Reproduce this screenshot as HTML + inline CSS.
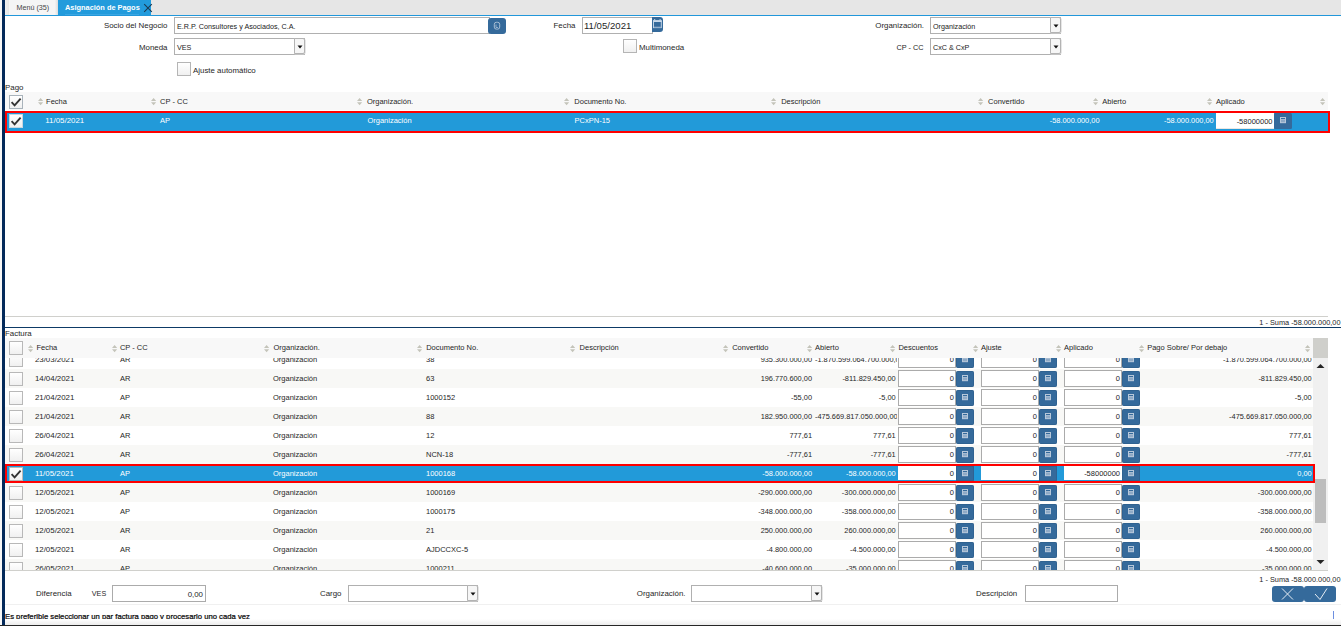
<!DOCTYPE html><html><head><meta charset="utf-8"><style>
html,body{margin:0;padding:0;}
body{width:1341px;height:626px;position:relative;overflow:hidden;background:#fff;font-family:"Liberation Sans", sans-serif;}
body div, body svg{position:absolute;box-sizing:border-box;}
.t{white-space:nowrap;}
.cb{width:14px;height:14px;border:1px solid #b5b5b5;background:linear-gradient(#fff,#f0f0f0);}
.btn{background:#356a9b;}
.inp{border:1px solid #ababab;background:#fff;}
</style></head><body>

<div style="left:0px;top:0px;width:2px;height:626px;background:#f7f7f7"></div>
<div style="left:2px;top:0px;width:3px;height:626px;background:#03295a"></div>
<div style="left:5px;top:0px;width:1336px;height:15px;background:#e6e6e6"></div>
<div style="left:5px;top:0px;width:52px;height:15px;background:#f5f5f5"></div>
<div style="left:5px;top:0px;width:4px;height:15px;background:linear-gradient(90deg,#f0f0f0,#e6e6e6)"></div>
<div style="left:58px;top:0px;width:93px;height:15px;background:#229bdc"></div>
<div style="left:55px;top:0px;width:3px;height:15px;background:linear-gradient(90deg,#f3f3f3,#dcdcdc)"></div>
<div style="left:5px;top:15px;width:1336px;height:1px;background:#2197da"></div>
<div class="t" style="left:16.5px;top:1.5px;height:12px;line-height:12px;font-size:7.2px;color:#444;">Menú (35)</div>
<div class="t" style="left:65px;top:1.5px;height:12px;line-height:12px;font-size:7.4px;color:#fff;font-weight:bold">Asignación de Pagos</div>
<div style="left:65px;top:14px;width:74px;height:1px;background:#3aa6e2"></div>
<svg style="left:143px;top:3px" width="10" height="10" viewBox="0 0 10 10"><path d="M1.2 1.2 L8.8 8.8 M8.8 1.2 L1.2 8.8" stroke="#1b3a52" stroke-width="1.1"/></svg>
<div class="t" style="right:1173.5px;top:20.3px;height:12px;line-height:12px;font-size:7.9px;color:#262626;text-align:right;">Socio del Negocio</div>
<div style="left:174px;top:17px;width:316px;height:17px;border:1px solid #b0b0b0;background:#fff"></div>
<div class="t" style="left:177px;top:20.5px;height:12px;line-height:12px;font-size:7.2px;color:#222;">E.R.P. Consultores y Asociados, C.A.</div>
<div class="btn" style="left:488px;top:18px;width:18px;height:16px;border-radius:3px"><svg width="18" height="16" style="position:absolute;left:0;top:0"><rect x="6.3" y="4.3" width="5.4" height="6.8" rx="2" fill="none" stroke="#a9bfd5" stroke-width="1"/><path d="M8 6.5 L8 9.5 L10 9.5" stroke="#a9bfd5" stroke-width="0.8" fill="none"/></svg></div>
<div class="t" style="right:1173.5px;top:41.8px;height:12px;line-height:12px;font-size:7.9px;color:#262626;text-align:right;">Moneda</div>
<div style="left:174px;top:38px;width:131px;height:17px;border:1px solid #b0b0b0;background:#fff"></div>
<div style="left:294px;top:38px;width:11px;height:16px;border:1px solid #b3b3b3;background:#f6f6f6;border-radius:0 2px 2px 0;box-shadow:0.6px 0.6px 0 #d6d6d6"></div>
<svg style="left:297px;top:44.5px" width="6" height="4" viewBox="0 0 6 4"><path d="M0.5 0.5 L5.5 0.5 L3 3.5Z" fill="#111"/></svg>
<div class="t" style="left:177px;top:41.8px;height:12px;line-height:12px;font-size:7.2px;color:#222;">VES</div>
<div class="cb" style="left:177px;top:62px;border-color:#b5b5b5"></div>
<div class="t" style="left:193px;top:65.3px;height:12px;line-height:12px;font-size:7.9px;color:#262626;">Ajuste automático</div>
<div class="t" style="left:553.5px;top:20.3px;height:12px;line-height:12px;font-size:7.9px;color:#262626;">Fecha</div>
<div style="left:582px;top:17px;width:71px;height:17px;border:1px solid #b0b0b0;background:#fff"></div>
<div class="t" style="left:584px;top:19.8px;height:12px;line-height:12px;font-size:9.6px;color:#262626;">11/05/2021</div>
<div class="btn" style="left:651.5px;top:17.3px;width:11.2px;height:15.2px;border-radius:0 3px 3px 0"><svg width="12" height="16" style="position:absolute;left:0;top:0"><rect x="1.5" y="4" width="7.8" height="6.6" fill="none" stroke="#c2d3e4" stroke-width="1"/><rect x="1" y="3.2" width="8.8" height="1.8" fill="#c9d9ea"/><rect x="2.2" y="2" width="1" height="1.5" fill="#c9d9ea"/><rect x="7.6" y="2" width="1" height="1.5" fill="#c9d9ea"/><rect x="2" y="9.6" width="7" height="1" fill="#7f9fc0"/></svg></div>
<div class="cb" style="left:623px;top:39px;border-color:#b5b5b5"></div>
<div class="t" style="left:639px;top:41.8px;height:12px;line-height:12px;font-size:7.9px;color:#262626;">Multimoneda</div>
<div class="t" style="right:417px;top:20.3px;height:12px;line-height:12px;font-size:7.9px;color:#262626;text-align:right;">Organización.</div>
<div style="left:930px;top:17px;width:131px;height:17px;border:1px solid #b0b0b0;background:#fff"></div>
<div style="left:1050px;top:17px;width:11px;height:16px;border:1px solid #b3b3b3;background:#f6f6f6;border-radius:0 2px 2px 0;box-shadow:0.6px 0.6px 0 #d6d6d6"></div>
<svg style="left:1053px;top:23.5px" width="6" height="4" viewBox="0 0 6 4"><path d="M0.5 0.5 L5.5 0.5 L3 3.5Z" fill="#111"/></svg>
<div class="t" style="left:933px;top:20.8px;height:12px;line-height:12px;font-size:7.2px;color:#222;">Organización</div>
<div class="t" style="right:417.5px;top:41.8px;height:12px;line-height:12px;font-size:7.3px;color:#262626;text-align:right;">CP - CC</div>
<div style="left:930px;top:38px;width:131px;height:17px;border:1px solid #b0b0b0;background:#fff"></div>
<div style="left:1050px;top:38px;width:11px;height:16px;border:1px solid #b3b3b3;background:#f6f6f6;border-radius:0 2px 2px 0;box-shadow:0.6px 0.6px 0 #d6d6d6"></div>
<svg style="left:1053px;top:44.5px" width="6" height="4" viewBox="0 0 6 4"><path d="M0.5 0.5 L5.5 0.5 L3 3.5Z" fill="#111"/></svg>
<div class="t" style="left:933px;top:41.8px;height:12px;line-height:12px;font-size:7.2px;color:#222;">CxC &amp; CxP</div>
<div class="t" style="left:5px;top:82.3px;height:12px;line-height:12px;font-size:7.9px;color:#262626;">Pago</div>
<div style="left:5px;top:92px;width:1323px;height:18px;background:#f8f8f8"></div>
<div class="cb" style="left:9px;top:95px;border-color:#a9b3bb"><svg width="14" height="14" viewBox="0 0 14 14" style="position:absolute;left:-1px;top:-1px"><path d="M2.6 7.2 L5.6 10.3 L11.6 3.6" stroke="#333" stroke-width="1.9" fill="none"/></svg></div>
<svg class="si" style="left:37.9px;top:97.80000000000001px" width="6" height="8" viewBox="0 0 6 8"><path d="M0 3 L2.6 0 L5.2 3Z M0 4.2 L2.6 7.2 L5.2 4.2Z" fill="#c4c4ba"/></svg>
<div class="t" style="left:46.1px;top:95.5px;height:12px;line-height:12px;font-size:7.5px;color:#262626;">Fecha</div>
<svg class="si" style="left:150.7px;top:97.80000000000001px" width="6" height="8" viewBox="0 0 6 8"><path d="M0 3 L2.6 0 L5.2 3Z M0 4.2 L2.6 7.2 L5.2 4.2Z" fill="#c4c4ba"/></svg>
<div class="t" style="left:160.1px;top:95.5px;height:12px;line-height:12px;font-size:7.5px;color:#262626;">CP - CC</div>
<svg class="si" style="left:357.2px;top:97.80000000000001px" width="6" height="8" viewBox="0 0 6 8"><path d="M0 3 L2.6 0 L5.2 3Z M0 4.2 L2.6 7.2 L5.2 4.2Z" fill="#c4c4ba"/></svg>
<div class="t" style="left:366.9px;top:95.5px;height:12px;line-height:12px;font-size:7.5px;color:#262626;">Organización.</div>
<svg class="si" style="left:563.9px;top:97.80000000000001px" width="6" height="8" viewBox="0 0 6 8"><path d="M0 3 L2.6 0 L5.2 3Z M0 4.2 L2.6 7.2 L5.2 4.2Z" fill="#c4c4ba"/></svg>
<div class="t" style="left:574.3000000000001px;top:95.5px;height:12px;line-height:12px;font-size:7.5px;color:#262626;">Documento No.</div>
<svg class="si" style="left:771.0px;top:97.80000000000001px" width="6" height="8" viewBox="0 0 6 8"><path d="M0 3 L2.6 0 L5.2 3Z M0 4.2 L2.6 7.2 L5.2 4.2Z" fill="#c4c4ba"/></svg>
<div class="t" style="left:781.2px;top:95.5px;height:12px;line-height:12px;font-size:7.5px;color:#262626;">Descripción</div>
<svg class="si" style="left:977.8px;top:97.80000000000001px" width="6" height="8" viewBox="0 0 6 8"><path d="M0 3 L2.6 0 L5.2 3Z M0 4.2 L2.6 7.2 L5.2 4.2Z" fill="#c4c4ba"/></svg>
<div class="t" style="left:988.1px;top:95.5px;height:12px;line-height:12px;font-size:7.5px;color:#262626;">Convertido</div>
<svg class="si" style="left:1092.9px;top:97.80000000000001px" width="6" height="8" viewBox="0 0 6 8"><path d="M0 3 L2.6 0 L5.2 3Z M0 4.2 L2.6 7.2 L5.2 4.2Z" fill="#c4c4ba"/></svg>
<div class="t" style="left:1102.3px;top:95.5px;height:12px;line-height:12px;font-size:7.5px;color:#262626;">Abierto</div>
<svg class="si" style="left:1207.0px;top:97.80000000000001px" width="6" height="8" viewBox="0 0 6 8"><path d="M0 3 L2.6 0 L5.2 3Z M0 4.2 L2.6 7.2 L5.2 4.2Z" fill="#c4c4ba"/></svg>
<div class="t" style="left:1216.0px;top:95.5px;height:12px;line-height:12px;font-size:7.5px;color:#262626;">Aplicado</div>
<svg class="si" style="left:1320.2px;top:97.80000000000001px" width="6" height="8" viewBox="0 0 6 8"><path d="M0 3 L2.6 0 L5.2 3Z M0 4.2 L2.6 7.2 L5.2 4.2Z" fill="#c4c4ba"/></svg>
<div style="left:5px;top:111px;width:1325px;height:22px;border:2px solid #f00;background:#229ad9"></div>
<div class="cb" style="left:9px;top:114px;border-color:#c9d6e0"><svg width="14" height="14" viewBox="0 0 14 14" style="position:absolute;left:-1px;top:-1px"><path d="M2.6 7.2 L5.6 10.3 L11.6 3.6" stroke="#333" stroke-width="1.9" fill="none"/></svg></div>
<div class="t" style="left:45.3px;top:115.2px;height:12px;line-height:12px;font-size:7.9px;color:#fff;">11/05/2021</div>
<div class="t" style="left:160px;top:115.3px;height:12px;line-height:12px;font-size:7.5px;color:#fff;">AP</div>
<div class="t" style="left:367.4px;top:115.3px;height:12px;line-height:12px;font-size:7.5px;color:#fff;">Organización</div>
<div class="t" style="left:574.6px;top:115.3px;height:12px;line-height:12px;font-size:7.5px;color:#fff;">PCxPN-15</div>
<div class="t" style="right:241.5px;top:115.3px;height:12px;line-height:12px;font-size:7.4px;color:#fff;text-align:right;">-58.000.000,00</div>
<div class="t" style="right:127.29999999999995px;top:115.3px;height:12px;line-height:12px;font-size:7.4px;color:#fff;text-align:right;">-58.000.000,00</div>
<div style="left:1216px;top:113px;width:58px;height:15.8px;background:#fff;box-shadow:inset 0 -0.6px 0 #d8cfc8"></div>
<div class="t" style="right:68.5px;top:116.3px;height:12px;line-height:12px;font-size:7.5px;color:#222;text-align:right;">-58000000</div>
<div class="btn" style="left:1273.6px;top:113px;width:18px;height:16px;border-radius:1.5px"><svg width="18" height="16" style="position:absolute;left:0;top:0"><rect x="6" y="4" width="6" height="6.2" fill="#b7c8da"/><rect x="7" y="5" width="4" height="1.1" fill="#356a9b"/><rect x="7" y="6.9" width="4" height="2.3" fill="#8faac6"/></svg></div>
<div style="left:5px;top:316px;width:1323px;height:1px;background:#d0d0cc"></div>
<div class="t" style="left:1341px;top:316.5px;height:12px;line-height:12px;font-size:7.35px;color:#262626;left:1259.3px;right:auto">1 - Suma -58.000.000,00</div>
<div style="left:5px;top:327px;width:1336px;height:1px;background:#0d3a66"></div>
<div class="t" style="left:5px;top:327.8px;height:12px;line-height:12px;font-size:7.9px;color:#262626;">Factura</div>
<div style="left:5px;top:357.6px;width:1308px;height:212.4px;overflow:hidden">
<div class="cb" style="left:4px;top:-4.800000000000011px;border-color:#b8b8b8"></div>
<div class="t" style="left:29.9px;top:-4.000000000000011px;height:12px;line-height:12px;font-size:7.9px;color:#262626">23/03/2021</div>
<div class="t" style="left:115px;top:-4.000000000000011px;height:12px;line-height:12px;font-size:7.5px;color:#262626">AR</div>
<div class="t" style="left:268px;top:-4.000000000000011px;height:12px;line-height:12px;font-size:7.5px;color:#262626">Organización</div>
<div class="t" style="left:421px;top:-4.000000000000011px;height:12px;line-height:12px;font-size:7.5px;color:#262626">38</div>
<div style="left:713px;top:-7.800000000000011px;width:96px;height:19px;overflow:hidden">
<div class="t" style="right:2px;top:3.8000000000000007px;height:12px;line-height:12px;font-size:7.4px;color:#262626;text-align:right">935.300.000,00</div></div>
<div style="left:809px;top:-7.800000000000011px;width:83px;height:19px;overflow:hidden">
<div class="t" style="left:1px;top:3.8000000000000007px;height:12px;line-height:12px;font-size:7.4px;color:#262626;text-align:right">-1.870.599.064.700.000,00</div></div>
<div class="inp" style="left:893px;top:-6.600000000000011px;width:58px;height:16.7px"></div>
<div class="t" style="left:893px;width:56px;top:-4.000000000000011px;height:12px;line-height:12px;font-size:7.5px;color:#222;text-align:right">0</div>
<div class="btn" style="left:951px;top:-5.300000000000011px;width:18px;height:15.5px;border-radius:2.2px;box-shadow:inset 0 0 0 0.5px #2b5a86"><svg width="18" height="16" style="position:absolute;left:0;top:0"><rect x="6" y="4" width="6" height="6.2" fill="#b7c8da"/><rect x="7" y="5" width="4" height="1.1" fill="#356a9b"/><rect x="7" y="6.9" width="4" height="2.3" fill="#8faac6"/></svg></div>
<div class="inp" style="left:976px;top:-6.600000000000011px;width:58px;height:16.7px"></div>
<div class="t" style="left:976px;width:56px;top:-4.000000000000011px;height:12px;line-height:12px;font-size:7.5px;color:#222;text-align:right">0</div>
<div class="btn" style="left:1034px;top:-5.300000000000011px;width:18px;height:15.5px;border-radius:2.2px;box-shadow:inset 0 0 0 0.5px #2b5a86"><svg width="18" height="16" style="position:absolute;left:0;top:0"><rect x="6" y="4" width="6" height="6.2" fill="#b7c8da"/><rect x="7" y="5" width="4" height="1.1" fill="#356a9b"/><rect x="7" y="6.9" width="4" height="2.3" fill="#8faac6"/></svg></div>
<div class="inp" style="left:1059px;top:-6.600000000000011px;width:58px;height:16.7px"></div>
<div class="t" style="left:1059px;width:56px;top:-4.000000000000011px;height:12px;line-height:12px;font-size:7.5px;color:#222;text-align:right">0</div>
<div class="btn" style="left:1117px;top:-5.300000000000011px;width:18px;height:15.5px;border-radius:2.2px;box-shadow:inset 0 0 0 0.5px #2b5a86"><svg width="18" height="16" style="position:absolute;left:0;top:0"><rect x="6" y="4" width="6" height="6.2" fill="#b7c8da"/><rect x="7" y="5" width="4" height="1.1" fill="#356a9b"/><rect x="7" y="6.9" width="4" height="2.3" fill="#8faac6"/></svg></div>
<div class="t" style="left:1156.7px;width:150px;top:-4.000000000000011px;height:12px;line-height:12px;font-size:7.4px;color:#262626;text-align:right">-1.870.599.064.700.000,00</div>
<div style="left:0px;top:11.199999999999989px;width:1308px;height:19px;background:#f8f8f6"></div>
<div class="cb" style="left:4px;top:14.199999999999989px;border-color:#b8b8b8"></div>
<div class="t" style="left:29.9px;top:14.99999999999999px;height:12px;line-height:12px;font-size:7.9px;color:#262626">14/04/2021</div>
<div class="t" style="left:115px;top:14.99999999999999px;height:12px;line-height:12px;font-size:7.5px;color:#262626">AR</div>
<div class="t" style="left:268px;top:14.99999999999999px;height:12px;line-height:12px;font-size:7.5px;color:#262626">Organización</div>
<div class="t" style="left:421px;top:14.99999999999999px;height:12px;line-height:12px;font-size:7.5px;color:#262626">63</div>
<div style="left:713px;top:11.199999999999989px;width:96px;height:19px;overflow:hidden">
<div class="t" style="right:2px;top:3.8000000000000007px;height:12px;line-height:12px;font-size:7.4px;color:#262626;text-align:right">196.770.600,00</div></div>
<div style="left:809px;top:11.199999999999989px;width:83px;height:19px;overflow:hidden">
<div class="t" style="right:1.3px;top:3.8000000000000007px;height:12px;line-height:12px;font-size:7.4px;color:#262626;text-align:right">-811.829.450,00</div></div>
<div class="inp" style="left:893px;top:12.399999999999988px;width:58px;height:16.7px"></div>
<div class="t" style="left:893px;width:56px;top:14.99999999999999px;height:12px;line-height:12px;font-size:7.5px;color:#222;text-align:right">0</div>
<div class="btn" style="left:951px;top:13.699999999999989px;width:18px;height:15.5px;border-radius:2.2px;box-shadow:inset 0 0 0 0.5px #2b5a86"><svg width="18" height="16" style="position:absolute;left:0;top:0"><rect x="6" y="4" width="6" height="6.2" fill="#b7c8da"/><rect x="7" y="5" width="4" height="1.1" fill="#356a9b"/><rect x="7" y="6.9" width="4" height="2.3" fill="#8faac6"/></svg></div>
<div class="inp" style="left:976px;top:12.399999999999988px;width:58px;height:16.7px"></div>
<div class="t" style="left:976px;width:56px;top:14.99999999999999px;height:12px;line-height:12px;font-size:7.5px;color:#222;text-align:right">0</div>
<div class="btn" style="left:1034px;top:13.699999999999989px;width:18px;height:15.5px;border-radius:2.2px;box-shadow:inset 0 0 0 0.5px #2b5a86"><svg width="18" height="16" style="position:absolute;left:0;top:0"><rect x="6" y="4" width="6" height="6.2" fill="#b7c8da"/><rect x="7" y="5" width="4" height="1.1" fill="#356a9b"/><rect x="7" y="6.9" width="4" height="2.3" fill="#8faac6"/></svg></div>
<div class="inp" style="left:1059px;top:12.399999999999988px;width:58px;height:16.7px"></div>
<div class="t" style="left:1059px;width:56px;top:14.99999999999999px;height:12px;line-height:12px;font-size:7.5px;color:#222;text-align:right">0</div>
<div class="btn" style="left:1117px;top:13.699999999999989px;width:18px;height:15.5px;border-radius:2.2px;box-shadow:inset 0 0 0 0.5px #2b5a86"><svg width="18" height="16" style="position:absolute;left:0;top:0"><rect x="6" y="4" width="6" height="6.2" fill="#b7c8da"/><rect x="7" y="5" width="4" height="1.1" fill="#356a9b"/><rect x="7" y="6.9" width="4" height="2.3" fill="#8faac6"/></svg></div>
<div class="t" style="left:1156.7px;width:150px;top:14.99999999999999px;height:12px;line-height:12px;font-size:7.4px;color:#262626;text-align:right">-811.829.450,00</div>
<div class="cb" style="left:4px;top:33.19999999999999px;border-color:#b8b8b8"></div>
<div class="t" style="left:29.9px;top:33.999999999999986px;height:12px;line-height:12px;font-size:7.9px;color:#262626">21/04/2021</div>
<div class="t" style="left:115px;top:33.999999999999986px;height:12px;line-height:12px;font-size:7.5px;color:#262626">AP</div>
<div class="t" style="left:268px;top:33.999999999999986px;height:12px;line-height:12px;font-size:7.5px;color:#262626">Organización</div>
<div class="t" style="left:421px;top:33.999999999999986px;height:12px;line-height:12px;font-size:7.5px;color:#262626">1000152</div>
<div style="left:713px;top:30.19999999999999px;width:96px;height:19px;overflow:hidden">
<div class="t" style="right:2px;top:3.799999999999997px;height:12px;line-height:12px;font-size:7.4px;color:#262626;text-align:right">-55,00</div></div>
<div style="left:809px;top:30.19999999999999px;width:83px;height:19px;overflow:hidden">
<div class="t" style="right:1.3px;top:3.799999999999997px;height:12px;line-height:12px;font-size:7.4px;color:#262626;text-align:right">-5,00</div></div>
<div class="inp" style="left:893px;top:31.399999999999988px;width:58px;height:16.7px"></div>
<div class="t" style="left:893px;width:56px;top:33.999999999999986px;height:12px;line-height:12px;font-size:7.5px;color:#222;text-align:right">0</div>
<div class="btn" style="left:951px;top:32.69999999999999px;width:18px;height:15.5px;border-radius:2.2px;box-shadow:inset 0 0 0 0.5px #2b5a86"><svg width="18" height="16" style="position:absolute;left:0;top:0"><rect x="6" y="4" width="6" height="6.2" fill="#b7c8da"/><rect x="7" y="5" width="4" height="1.1" fill="#356a9b"/><rect x="7" y="6.9" width="4" height="2.3" fill="#8faac6"/></svg></div>
<div class="inp" style="left:976px;top:31.399999999999988px;width:58px;height:16.7px"></div>
<div class="t" style="left:976px;width:56px;top:33.999999999999986px;height:12px;line-height:12px;font-size:7.5px;color:#222;text-align:right">0</div>
<div class="btn" style="left:1034px;top:32.69999999999999px;width:18px;height:15.5px;border-radius:2.2px;box-shadow:inset 0 0 0 0.5px #2b5a86"><svg width="18" height="16" style="position:absolute;left:0;top:0"><rect x="6" y="4" width="6" height="6.2" fill="#b7c8da"/><rect x="7" y="5" width="4" height="1.1" fill="#356a9b"/><rect x="7" y="6.9" width="4" height="2.3" fill="#8faac6"/></svg></div>
<div class="inp" style="left:1059px;top:31.399999999999988px;width:58px;height:16.7px"></div>
<div class="t" style="left:1059px;width:56px;top:33.999999999999986px;height:12px;line-height:12px;font-size:7.5px;color:#222;text-align:right">0</div>
<div class="btn" style="left:1117px;top:32.69999999999999px;width:18px;height:15.5px;border-radius:2.2px;box-shadow:inset 0 0 0 0.5px #2b5a86"><svg width="18" height="16" style="position:absolute;left:0;top:0"><rect x="6" y="4" width="6" height="6.2" fill="#b7c8da"/><rect x="7" y="5" width="4" height="1.1" fill="#356a9b"/><rect x="7" y="6.9" width="4" height="2.3" fill="#8faac6"/></svg></div>
<div class="t" style="left:1156.7px;width:150px;top:33.999999999999986px;height:12px;line-height:12px;font-size:7.4px;color:#262626;text-align:right">-5,00</div>
<div style="left:0px;top:49.19999999999999px;width:1308px;height:19px;background:#f8f8f6"></div>
<div class="cb" style="left:4px;top:52.19999999999999px;border-color:#b8b8b8"></div>
<div class="t" style="left:29.9px;top:52.999999999999986px;height:12px;line-height:12px;font-size:7.9px;color:#262626">21/04/2021</div>
<div class="t" style="left:115px;top:52.999999999999986px;height:12px;line-height:12px;font-size:7.5px;color:#262626">AR</div>
<div class="t" style="left:268px;top:52.999999999999986px;height:12px;line-height:12px;font-size:7.5px;color:#262626">Organización</div>
<div class="t" style="left:421px;top:52.999999999999986px;height:12px;line-height:12px;font-size:7.5px;color:#262626">88</div>
<div style="left:713px;top:49.19999999999999px;width:96px;height:19px;overflow:hidden">
<div class="t" style="right:2px;top:3.799999999999997px;height:12px;line-height:12px;font-size:7.4px;color:#262626;text-align:right">182.950.000,00</div></div>
<div style="left:809px;top:49.19999999999999px;width:83px;height:19px;overflow:hidden">
<div class="t" style="left:1px;top:3.799999999999997px;height:12px;line-height:12px;font-size:7.4px;color:#262626;text-align:right">-475.669.817.050.000,00</div></div>
<div class="inp" style="left:893px;top:50.39999999999999px;width:58px;height:16.7px"></div>
<div class="t" style="left:893px;width:56px;top:52.999999999999986px;height:12px;line-height:12px;font-size:7.5px;color:#222;text-align:right">0</div>
<div class="btn" style="left:951px;top:51.69999999999999px;width:18px;height:15.5px;border-radius:2.2px;box-shadow:inset 0 0 0 0.5px #2b5a86"><svg width="18" height="16" style="position:absolute;left:0;top:0"><rect x="6" y="4" width="6" height="6.2" fill="#b7c8da"/><rect x="7" y="5" width="4" height="1.1" fill="#356a9b"/><rect x="7" y="6.9" width="4" height="2.3" fill="#8faac6"/></svg></div>
<div class="inp" style="left:976px;top:50.39999999999999px;width:58px;height:16.7px"></div>
<div class="t" style="left:976px;width:56px;top:52.999999999999986px;height:12px;line-height:12px;font-size:7.5px;color:#222;text-align:right">0</div>
<div class="btn" style="left:1034px;top:51.69999999999999px;width:18px;height:15.5px;border-radius:2.2px;box-shadow:inset 0 0 0 0.5px #2b5a86"><svg width="18" height="16" style="position:absolute;left:0;top:0"><rect x="6" y="4" width="6" height="6.2" fill="#b7c8da"/><rect x="7" y="5" width="4" height="1.1" fill="#356a9b"/><rect x="7" y="6.9" width="4" height="2.3" fill="#8faac6"/></svg></div>
<div class="inp" style="left:1059px;top:50.39999999999999px;width:58px;height:16.7px"></div>
<div class="t" style="left:1059px;width:56px;top:52.999999999999986px;height:12px;line-height:12px;font-size:7.5px;color:#222;text-align:right">0</div>
<div class="btn" style="left:1117px;top:51.69999999999999px;width:18px;height:15.5px;border-radius:2.2px;box-shadow:inset 0 0 0 0.5px #2b5a86"><svg width="18" height="16" style="position:absolute;left:0;top:0"><rect x="6" y="4" width="6" height="6.2" fill="#b7c8da"/><rect x="7" y="5" width="4" height="1.1" fill="#356a9b"/><rect x="7" y="6.9" width="4" height="2.3" fill="#8faac6"/></svg></div>
<div class="t" style="left:1156.7px;width:150px;top:52.999999999999986px;height:12px;line-height:12px;font-size:7.4px;color:#262626;text-align:right">-475.669.817.050.000,00</div>
<div class="cb" style="left:4px;top:71.19999999999999px;border-color:#b8b8b8"></div>
<div class="t" style="left:29.9px;top:71.99999999999999px;height:12px;line-height:12px;font-size:7.9px;color:#262626">26/04/2021</div>
<div class="t" style="left:115px;top:71.99999999999999px;height:12px;line-height:12px;font-size:7.5px;color:#262626">AR</div>
<div class="t" style="left:268px;top:71.99999999999999px;height:12px;line-height:12px;font-size:7.5px;color:#262626">Organización</div>
<div class="t" style="left:421px;top:71.99999999999999px;height:12px;line-height:12px;font-size:7.5px;color:#262626">12</div>
<div style="left:713px;top:68.19999999999999px;width:96px;height:19px;overflow:hidden">
<div class="t" style="right:2px;top:3.799999999999997px;height:12px;line-height:12px;font-size:7.4px;color:#262626;text-align:right">777,61</div></div>
<div style="left:809px;top:68.19999999999999px;width:83px;height:19px;overflow:hidden">
<div class="t" style="right:1.3px;top:3.799999999999997px;height:12px;line-height:12px;font-size:7.4px;color:#262626;text-align:right">777,61</div></div>
<div class="inp" style="left:893px;top:69.39999999999999px;width:58px;height:16.7px"></div>
<div class="t" style="left:893px;width:56px;top:71.99999999999999px;height:12px;line-height:12px;font-size:7.5px;color:#222;text-align:right">0</div>
<div class="btn" style="left:951px;top:70.69999999999999px;width:18px;height:15.5px;border-radius:2.2px;box-shadow:inset 0 0 0 0.5px #2b5a86"><svg width="18" height="16" style="position:absolute;left:0;top:0"><rect x="6" y="4" width="6" height="6.2" fill="#b7c8da"/><rect x="7" y="5" width="4" height="1.1" fill="#356a9b"/><rect x="7" y="6.9" width="4" height="2.3" fill="#8faac6"/></svg></div>
<div class="inp" style="left:976px;top:69.39999999999999px;width:58px;height:16.7px"></div>
<div class="t" style="left:976px;width:56px;top:71.99999999999999px;height:12px;line-height:12px;font-size:7.5px;color:#222;text-align:right">0</div>
<div class="btn" style="left:1034px;top:70.69999999999999px;width:18px;height:15.5px;border-radius:2.2px;box-shadow:inset 0 0 0 0.5px #2b5a86"><svg width="18" height="16" style="position:absolute;left:0;top:0"><rect x="6" y="4" width="6" height="6.2" fill="#b7c8da"/><rect x="7" y="5" width="4" height="1.1" fill="#356a9b"/><rect x="7" y="6.9" width="4" height="2.3" fill="#8faac6"/></svg></div>
<div class="inp" style="left:1059px;top:69.39999999999999px;width:58px;height:16.7px"></div>
<div class="t" style="left:1059px;width:56px;top:71.99999999999999px;height:12px;line-height:12px;font-size:7.5px;color:#222;text-align:right">0</div>
<div class="btn" style="left:1117px;top:70.69999999999999px;width:18px;height:15.5px;border-radius:2.2px;box-shadow:inset 0 0 0 0.5px #2b5a86"><svg width="18" height="16" style="position:absolute;left:0;top:0"><rect x="6" y="4" width="6" height="6.2" fill="#b7c8da"/><rect x="7" y="5" width="4" height="1.1" fill="#356a9b"/><rect x="7" y="6.9" width="4" height="2.3" fill="#8faac6"/></svg></div>
<div class="t" style="left:1156.7px;width:150px;top:71.99999999999999px;height:12px;line-height:12px;font-size:7.4px;color:#262626;text-align:right">777,61</div>
<div style="left:0px;top:87.19999999999999px;width:1308px;height:19px;background:#f8f8f6"></div>
<div class="cb" style="left:4px;top:90.19999999999999px;border-color:#b8b8b8"></div>
<div class="t" style="left:29.9px;top:90.99999999999999px;height:12px;line-height:12px;font-size:7.9px;color:#262626">26/04/2021</div>
<div class="t" style="left:115px;top:90.99999999999999px;height:12px;line-height:12px;font-size:7.5px;color:#262626">AR</div>
<div class="t" style="left:268px;top:90.99999999999999px;height:12px;line-height:12px;font-size:7.5px;color:#262626">Organización</div>
<div class="t" style="left:421px;top:90.99999999999999px;height:12px;line-height:12px;font-size:7.5px;color:#262626">NCN-18</div>
<div style="left:713px;top:87.19999999999999px;width:96px;height:19px;overflow:hidden">
<div class="t" style="right:2px;top:3.799999999999997px;height:12px;line-height:12px;font-size:7.4px;color:#262626;text-align:right">-777,61</div></div>
<div style="left:809px;top:87.19999999999999px;width:83px;height:19px;overflow:hidden">
<div class="t" style="right:1.3px;top:3.799999999999997px;height:12px;line-height:12px;font-size:7.4px;color:#262626;text-align:right">-777,61</div></div>
<div class="inp" style="left:893px;top:88.39999999999999px;width:58px;height:16.7px"></div>
<div class="t" style="left:893px;width:56px;top:90.99999999999999px;height:12px;line-height:12px;font-size:7.5px;color:#222;text-align:right">0</div>
<div class="btn" style="left:951px;top:89.69999999999999px;width:18px;height:15.5px;border-radius:2.2px;box-shadow:inset 0 0 0 0.5px #2b5a86"><svg width="18" height="16" style="position:absolute;left:0;top:0"><rect x="6" y="4" width="6" height="6.2" fill="#b7c8da"/><rect x="7" y="5" width="4" height="1.1" fill="#356a9b"/><rect x="7" y="6.9" width="4" height="2.3" fill="#8faac6"/></svg></div>
<div class="inp" style="left:976px;top:88.39999999999999px;width:58px;height:16.7px"></div>
<div class="t" style="left:976px;width:56px;top:90.99999999999999px;height:12px;line-height:12px;font-size:7.5px;color:#222;text-align:right">0</div>
<div class="btn" style="left:1034px;top:89.69999999999999px;width:18px;height:15.5px;border-radius:2.2px;box-shadow:inset 0 0 0 0.5px #2b5a86"><svg width="18" height="16" style="position:absolute;left:0;top:0"><rect x="6" y="4" width="6" height="6.2" fill="#b7c8da"/><rect x="7" y="5" width="4" height="1.1" fill="#356a9b"/><rect x="7" y="6.9" width="4" height="2.3" fill="#8faac6"/></svg></div>
<div class="inp" style="left:1059px;top:88.39999999999999px;width:58px;height:16.7px"></div>
<div class="t" style="left:1059px;width:56px;top:90.99999999999999px;height:12px;line-height:12px;font-size:7.5px;color:#222;text-align:right">0</div>
<div class="btn" style="left:1117px;top:89.69999999999999px;width:18px;height:15.5px;border-radius:2.2px;box-shadow:inset 0 0 0 0.5px #2b5a86"><svg width="18" height="16" style="position:absolute;left:0;top:0"><rect x="6" y="4" width="6" height="6.2" fill="#b7c8da"/><rect x="7" y="5" width="4" height="1.1" fill="#356a9b"/><rect x="7" y="6.9" width="4" height="2.3" fill="#8faac6"/></svg></div>
<div class="t" style="left:1156.7px;width:150px;top:90.99999999999999px;height:12px;line-height:12px;font-size:7.4px;color:#262626;text-align:right">-777,61</div>
<div style="left:0px;top:106.39999999999999px;width:1308px;height:19px;background:#229ad9"></div>
<div class="cb" style="left:4px;top:109.19999999999999px;border-color:#b8b8b8"><svg width="14" height="14" viewBox="0 0 14 14" style="position:absolute;left:-1px;top:-1px"><path d="M2.6 7.2 L5.6 10.3 L11.6 3.6" stroke="#333" stroke-width="1.9" fill="none"/></svg></div>
<div class="t" style="left:29.9px;top:109.99999999999999px;height:12px;line-height:12px;font-size:7.9px;color:#fff">11/05/2021</div>
<div class="t" style="left:115px;top:109.99999999999999px;height:12px;line-height:12px;font-size:7.5px;color:#fff">AP</div>
<div class="t" style="left:268px;top:109.99999999999999px;height:12px;line-height:12px;font-size:7.5px;color:#fff">Organización</div>
<div class="t" style="left:421px;top:109.99999999999999px;height:12px;line-height:12px;font-size:7.5px;color:#fff">1000168</div>
<div style="left:713px;top:106.19999999999999px;width:96px;height:19px;overflow:hidden">
<div class="t" style="right:2px;top:3.799999999999997px;height:12px;line-height:12px;font-size:7.4px;color:#fff;text-align:right">-58.000.000,00</div></div>
<div style="left:809px;top:106.19999999999999px;width:83px;height:19px;overflow:hidden">
<div class="t" style="right:1.3px;top:3.799999999999997px;height:12px;line-height:12px;font-size:7.4px;color:#fff;text-align:right">-58.000.000,00</div></div>
<div class="inp" style="left:893px;top:107.39999999999999px;width:58px;height:15px;border-color:#fff"></div>
<div class="t" style="left:893px;width:56px;top:109.99999999999999px;height:12px;line-height:12px;font-size:7.5px;color:#222;text-align:right">0</div>
<div class="btn" style="left:951px;top:108.39999999999999px;width:18px;height:15.5px;border-radius:1px;box-shadow:inset 0 0 0 0.5px #2b5a86"><svg width="18" height="16" style="position:absolute;left:0;top:0"><rect x="6" y="4" width="6" height="6.2" fill="#b7c8da"/><rect x="7" y="5" width="4" height="1.1" fill="#356a9b"/><rect x="7" y="6.9" width="4" height="2.3" fill="#8faac6"/></svg></div>
<div class="inp" style="left:976px;top:107.39999999999999px;width:58px;height:15px;border-color:#fff"></div>
<div class="t" style="left:976px;width:56px;top:109.99999999999999px;height:12px;line-height:12px;font-size:7.5px;color:#222;text-align:right">0</div>
<div class="btn" style="left:1034px;top:108.39999999999999px;width:18px;height:15.5px;border-radius:1px;box-shadow:inset 0 0 0 0.5px #2b5a86"><svg width="18" height="16" style="position:absolute;left:0;top:0"><rect x="6" y="4" width="6" height="6.2" fill="#b7c8da"/><rect x="7" y="5" width="4" height="1.1" fill="#356a9b"/><rect x="7" y="6.9" width="4" height="2.3" fill="#8faac6"/></svg></div>
<div class="inp" style="left:1059px;top:107.39999999999999px;width:58px;height:15px;border-color:#fff"></div>
<div class="t" style="left:1059px;width:56px;top:109.99999999999999px;height:12px;line-height:12px;font-size:7.5px;color:#222;text-align:right">-58000000</div>
<div class="btn" style="left:1117px;top:108.39999999999999px;width:18px;height:15.5px;border-radius:1px;box-shadow:inset 0 0 0 0.5px #2b5a86"><svg width="18" height="16" style="position:absolute;left:0;top:0"><rect x="6" y="4" width="6" height="6.2" fill="#b7c8da"/><rect x="7" y="5" width="4" height="1.1" fill="#356a9b"/><rect x="7" y="6.9" width="4" height="2.3" fill="#8faac6"/></svg></div>
<div class="t" style="left:1156.7px;width:150px;top:109.99999999999999px;height:12px;line-height:12px;font-size:7.4px;color:#fff;text-align:right">0,00</div>
<div style="left:0px;top:125.19999999999999px;width:1308px;height:19px;background:#f8f8f6"></div>
<div class="cb" style="left:4px;top:128.2px;border-color:#b8b8b8"></div>
<div class="t" style="left:29.9px;top:129.0px;height:12px;line-height:12px;font-size:7.9px;color:#262626">12/05/2021</div>
<div class="t" style="left:115px;top:129.0px;height:12px;line-height:12px;font-size:7.5px;color:#262626">AP</div>
<div class="t" style="left:268px;top:129.0px;height:12px;line-height:12px;font-size:7.5px;color:#262626">Organización</div>
<div class="t" style="left:421px;top:129.0px;height:12px;line-height:12px;font-size:7.5px;color:#262626">1000169</div>
<div style="left:713px;top:125.19999999999999px;width:96px;height:19px;overflow:hidden">
<div class="t" style="right:2px;top:3.8000000000000114px;height:12px;line-height:12px;font-size:7.4px;color:#262626;text-align:right">-290.000.000,00</div></div>
<div style="left:809px;top:125.19999999999999px;width:83px;height:19px;overflow:hidden">
<div class="t" style="right:1.3px;top:3.8000000000000114px;height:12px;line-height:12px;font-size:7.4px;color:#262626;text-align:right">-300.000.000,00</div></div>
<div class="inp" style="left:893px;top:126.39999999999999px;width:58px;height:16.7px"></div>
<div class="t" style="left:893px;width:56px;top:129.0px;height:12px;line-height:12px;font-size:7.5px;color:#222;text-align:right">0</div>
<div class="btn" style="left:951px;top:127.69999999999999px;width:18px;height:15.5px;border-radius:2.2px;box-shadow:inset 0 0 0 0.5px #2b5a86"><svg width="18" height="16" style="position:absolute;left:0;top:0"><rect x="6" y="4" width="6" height="6.2" fill="#b7c8da"/><rect x="7" y="5" width="4" height="1.1" fill="#356a9b"/><rect x="7" y="6.9" width="4" height="2.3" fill="#8faac6"/></svg></div>
<div class="inp" style="left:976px;top:126.39999999999999px;width:58px;height:16.7px"></div>
<div class="t" style="left:976px;width:56px;top:129.0px;height:12px;line-height:12px;font-size:7.5px;color:#222;text-align:right">0</div>
<div class="btn" style="left:1034px;top:127.69999999999999px;width:18px;height:15.5px;border-radius:2.2px;box-shadow:inset 0 0 0 0.5px #2b5a86"><svg width="18" height="16" style="position:absolute;left:0;top:0"><rect x="6" y="4" width="6" height="6.2" fill="#b7c8da"/><rect x="7" y="5" width="4" height="1.1" fill="#356a9b"/><rect x="7" y="6.9" width="4" height="2.3" fill="#8faac6"/></svg></div>
<div class="inp" style="left:1059px;top:126.39999999999999px;width:58px;height:16.7px"></div>
<div class="t" style="left:1059px;width:56px;top:129.0px;height:12px;line-height:12px;font-size:7.5px;color:#222;text-align:right">0</div>
<div class="btn" style="left:1117px;top:127.69999999999999px;width:18px;height:15.5px;border-radius:2.2px;box-shadow:inset 0 0 0 0.5px #2b5a86"><svg width="18" height="16" style="position:absolute;left:0;top:0"><rect x="6" y="4" width="6" height="6.2" fill="#b7c8da"/><rect x="7" y="5" width="4" height="1.1" fill="#356a9b"/><rect x="7" y="6.9" width="4" height="2.3" fill="#8faac6"/></svg></div>
<div class="t" style="left:1156.7px;width:150px;top:129.0px;height:12px;line-height:12px;font-size:7.4px;color:#262626;text-align:right">-300.000.000,00</div>
<div class="cb" style="left:4px;top:147.2px;border-color:#b8b8b8"></div>
<div class="t" style="left:29.9px;top:148.0px;height:12px;line-height:12px;font-size:7.9px;color:#262626">12/05/2021</div>
<div class="t" style="left:115px;top:148.0px;height:12px;line-height:12px;font-size:7.5px;color:#262626">AP</div>
<div class="t" style="left:268px;top:148.0px;height:12px;line-height:12px;font-size:7.5px;color:#262626">Organización</div>
<div class="t" style="left:421px;top:148.0px;height:12px;line-height:12px;font-size:7.5px;color:#262626">1000175</div>
<div style="left:713px;top:144.2px;width:96px;height:19px;overflow:hidden">
<div class="t" style="right:2px;top:3.8000000000000114px;height:12px;line-height:12px;font-size:7.4px;color:#262626;text-align:right">-348.000.000,00</div></div>
<div style="left:809px;top:144.2px;width:83px;height:19px;overflow:hidden">
<div class="t" style="right:1.3px;top:3.8000000000000114px;height:12px;line-height:12px;font-size:7.4px;color:#262626;text-align:right">-358.000.000,00</div></div>
<div class="inp" style="left:893px;top:145.39999999999998px;width:58px;height:16.7px"></div>
<div class="t" style="left:893px;width:56px;top:148.0px;height:12px;line-height:12px;font-size:7.5px;color:#222;text-align:right">0</div>
<div class="btn" style="left:951px;top:146.7px;width:18px;height:15.5px;border-radius:2.2px;box-shadow:inset 0 0 0 0.5px #2b5a86"><svg width="18" height="16" style="position:absolute;left:0;top:0"><rect x="6" y="4" width="6" height="6.2" fill="#b7c8da"/><rect x="7" y="5" width="4" height="1.1" fill="#356a9b"/><rect x="7" y="6.9" width="4" height="2.3" fill="#8faac6"/></svg></div>
<div class="inp" style="left:976px;top:145.39999999999998px;width:58px;height:16.7px"></div>
<div class="t" style="left:976px;width:56px;top:148.0px;height:12px;line-height:12px;font-size:7.5px;color:#222;text-align:right">0</div>
<div class="btn" style="left:1034px;top:146.7px;width:18px;height:15.5px;border-radius:2.2px;box-shadow:inset 0 0 0 0.5px #2b5a86"><svg width="18" height="16" style="position:absolute;left:0;top:0"><rect x="6" y="4" width="6" height="6.2" fill="#b7c8da"/><rect x="7" y="5" width="4" height="1.1" fill="#356a9b"/><rect x="7" y="6.9" width="4" height="2.3" fill="#8faac6"/></svg></div>
<div class="inp" style="left:1059px;top:145.39999999999998px;width:58px;height:16.7px"></div>
<div class="t" style="left:1059px;width:56px;top:148.0px;height:12px;line-height:12px;font-size:7.5px;color:#222;text-align:right">0</div>
<div class="btn" style="left:1117px;top:146.7px;width:18px;height:15.5px;border-radius:2.2px;box-shadow:inset 0 0 0 0.5px #2b5a86"><svg width="18" height="16" style="position:absolute;left:0;top:0"><rect x="6" y="4" width="6" height="6.2" fill="#b7c8da"/><rect x="7" y="5" width="4" height="1.1" fill="#356a9b"/><rect x="7" y="6.9" width="4" height="2.3" fill="#8faac6"/></svg></div>
<div class="t" style="left:1156.7px;width:150px;top:148.0px;height:12px;line-height:12px;font-size:7.4px;color:#262626;text-align:right">-358.000.000,00</div>
<div style="left:0px;top:163.19999999999993px;width:1308px;height:19px;background:#f8f8f6"></div>
<div class="cb" style="left:4px;top:166.19999999999993px;border-color:#b8b8b8"></div>
<div class="t" style="left:29.9px;top:166.99999999999994px;height:12px;line-height:12px;font-size:7.9px;color:#262626">12/05/2021</div>
<div class="t" style="left:115px;top:166.99999999999994px;height:12px;line-height:12px;font-size:7.5px;color:#262626">AR</div>
<div class="t" style="left:268px;top:166.99999999999994px;height:12px;line-height:12px;font-size:7.5px;color:#262626">Organización</div>
<div class="t" style="left:421px;top:166.99999999999994px;height:12px;line-height:12px;font-size:7.5px;color:#262626">21</div>
<div style="left:713px;top:163.19999999999993px;width:96px;height:19px;overflow:hidden">
<div class="t" style="right:2px;top:3.8000000000000114px;height:12px;line-height:12px;font-size:7.4px;color:#262626;text-align:right">250.000.000,00</div></div>
<div style="left:809px;top:163.19999999999993px;width:83px;height:19px;overflow:hidden">
<div class="t" style="right:1.3px;top:3.8000000000000114px;height:12px;line-height:12px;font-size:7.4px;color:#262626;text-align:right">260.000.000,00</div></div>
<div class="inp" style="left:893px;top:164.39999999999992px;width:58px;height:16.7px"></div>
<div class="t" style="left:893px;width:56px;top:166.99999999999994px;height:12px;line-height:12px;font-size:7.5px;color:#222;text-align:right">0</div>
<div class="btn" style="left:951px;top:165.69999999999993px;width:18px;height:15.5px;border-radius:2.2px;box-shadow:inset 0 0 0 0.5px #2b5a86"><svg width="18" height="16" style="position:absolute;left:0;top:0"><rect x="6" y="4" width="6" height="6.2" fill="#b7c8da"/><rect x="7" y="5" width="4" height="1.1" fill="#356a9b"/><rect x="7" y="6.9" width="4" height="2.3" fill="#8faac6"/></svg></div>
<div class="inp" style="left:976px;top:164.39999999999992px;width:58px;height:16.7px"></div>
<div class="t" style="left:976px;width:56px;top:166.99999999999994px;height:12px;line-height:12px;font-size:7.5px;color:#222;text-align:right">0</div>
<div class="btn" style="left:1034px;top:165.69999999999993px;width:18px;height:15.5px;border-radius:2.2px;box-shadow:inset 0 0 0 0.5px #2b5a86"><svg width="18" height="16" style="position:absolute;left:0;top:0"><rect x="6" y="4" width="6" height="6.2" fill="#b7c8da"/><rect x="7" y="5" width="4" height="1.1" fill="#356a9b"/><rect x="7" y="6.9" width="4" height="2.3" fill="#8faac6"/></svg></div>
<div class="inp" style="left:1059px;top:164.39999999999992px;width:58px;height:16.7px"></div>
<div class="t" style="left:1059px;width:56px;top:166.99999999999994px;height:12px;line-height:12px;font-size:7.5px;color:#222;text-align:right">0</div>
<div class="btn" style="left:1117px;top:165.69999999999993px;width:18px;height:15.5px;border-radius:2.2px;box-shadow:inset 0 0 0 0.5px #2b5a86"><svg width="18" height="16" style="position:absolute;left:0;top:0"><rect x="6" y="4" width="6" height="6.2" fill="#b7c8da"/><rect x="7" y="5" width="4" height="1.1" fill="#356a9b"/><rect x="7" y="6.9" width="4" height="2.3" fill="#8faac6"/></svg></div>
<div class="t" style="left:1156.7px;width:150px;top:166.99999999999994px;height:12px;line-height:12px;font-size:7.4px;color:#262626;text-align:right">260.000.000,00</div>
<div class="cb" style="left:4px;top:185.19999999999993px;border-color:#b8b8b8"></div>
<div class="t" style="left:29.9px;top:185.99999999999994px;height:12px;line-height:12px;font-size:7.9px;color:#262626">12/05/2021</div>
<div class="t" style="left:115px;top:185.99999999999994px;height:12px;line-height:12px;font-size:7.5px;color:#262626">AR</div>
<div class="t" style="left:268px;top:185.99999999999994px;height:12px;line-height:12px;font-size:7.5px;color:#262626">Organización</div>
<div class="t" style="left:421px;top:185.99999999999994px;height:12px;line-height:12px;font-size:7.5px;color:#262626">AJDCCXC-5</div>
<div style="left:713px;top:182.19999999999993px;width:96px;height:19px;overflow:hidden">
<div class="t" style="right:2px;top:3.8000000000000114px;height:12px;line-height:12px;font-size:7.4px;color:#262626;text-align:right">-4.800.000,00</div></div>
<div style="left:809px;top:182.19999999999993px;width:83px;height:19px;overflow:hidden">
<div class="t" style="right:1.3px;top:3.8000000000000114px;height:12px;line-height:12px;font-size:7.4px;color:#262626;text-align:right">-4.500.000,00</div></div>
<div class="inp" style="left:893px;top:183.39999999999992px;width:58px;height:16.7px"></div>
<div class="t" style="left:893px;width:56px;top:185.99999999999994px;height:12px;line-height:12px;font-size:7.5px;color:#222;text-align:right">0</div>
<div class="btn" style="left:951px;top:184.69999999999993px;width:18px;height:15.5px;border-radius:2.2px;box-shadow:inset 0 0 0 0.5px #2b5a86"><svg width="18" height="16" style="position:absolute;left:0;top:0"><rect x="6" y="4" width="6" height="6.2" fill="#b7c8da"/><rect x="7" y="5" width="4" height="1.1" fill="#356a9b"/><rect x="7" y="6.9" width="4" height="2.3" fill="#8faac6"/></svg></div>
<div class="inp" style="left:976px;top:183.39999999999992px;width:58px;height:16.7px"></div>
<div class="t" style="left:976px;width:56px;top:185.99999999999994px;height:12px;line-height:12px;font-size:7.5px;color:#222;text-align:right">0</div>
<div class="btn" style="left:1034px;top:184.69999999999993px;width:18px;height:15.5px;border-radius:2.2px;box-shadow:inset 0 0 0 0.5px #2b5a86"><svg width="18" height="16" style="position:absolute;left:0;top:0"><rect x="6" y="4" width="6" height="6.2" fill="#b7c8da"/><rect x="7" y="5" width="4" height="1.1" fill="#356a9b"/><rect x="7" y="6.9" width="4" height="2.3" fill="#8faac6"/></svg></div>
<div class="inp" style="left:1059px;top:183.39999999999992px;width:58px;height:16.7px"></div>
<div class="t" style="left:1059px;width:56px;top:185.99999999999994px;height:12px;line-height:12px;font-size:7.5px;color:#222;text-align:right">0</div>
<div class="btn" style="left:1117px;top:184.69999999999993px;width:18px;height:15.5px;border-radius:2.2px;box-shadow:inset 0 0 0 0.5px #2b5a86"><svg width="18" height="16" style="position:absolute;left:0;top:0"><rect x="6" y="4" width="6" height="6.2" fill="#b7c8da"/><rect x="7" y="5" width="4" height="1.1" fill="#356a9b"/><rect x="7" y="6.9" width="4" height="2.3" fill="#8faac6"/></svg></div>
<div class="t" style="left:1156.7px;width:150px;top:185.99999999999994px;height:12px;line-height:12px;font-size:7.4px;color:#262626;text-align:right">-4.500.000,00</div>
<div style="left:0px;top:201.19999999999993px;width:1308px;height:19px;background:#f8f8f6"></div>
<div class="cb" style="left:4px;top:204.19999999999993px;border-color:#b8b8b8"></div>
<div class="t" style="left:29.9px;top:204.99999999999994px;height:12px;line-height:12px;font-size:7.9px;color:#262626">26/05/2021</div>
<div class="t" style="left:115px;top:204.99999999999994px;height:12px;line-height:12px;font-size:7.5px;color:#262626">AP</div>
<div class="t" style="left:268px;top:204.99999999999994px;height:12px;line-height:12px;font-size:7.5px;color:#262626">Organización</div>
<div class="t" style="left:421px;top:204.99999999999994px;height:12px;line-height:12px;font-size:7.5px;color:#262626">1000211</div>
<div style="left:713px;top:201.19999999999993px;width:96px;height:19px;overflow:hidden">
<div class="t" style="right:2px;top:3.8000000000000114px;height:12px;line-height:12px;font-size:7.4px;color:#262626;text-align:right">-40.600.000,00</div></div>
<div style="left:809px;top:201.19999999999993px;width:83px;height:19px;overflow:hidden">
<div class="t" style="right:1.3px;top:3.8000000000000114px;height:12px;line-height:12px;font-size:7.4px;color:#262626;text-align:right">-35.000.000,00</div></div>
<div class="inp" style="left:893px;top:202.39999999999992px;width:58px;height:16.7px"></div>
<div class="t" style="left:893px;width:56px;top:204.99999999999994px;height:12px;line-height:12px;font-size:7.5px;color:#222;text-align:right">0</div>
<div class="btn" style="left:951px;top:203.69999999999993px;width:18px;height:15.5px;border-radius:2.2px;box-shadow:inset 0 0 0 0.5px #2b5a86"><svg width="18" height="16" style="position:absolute;left:0;top:0"><rect x="6" y="4" width="6" height="6.2" fill="#b7c8da"/><rect x="7" y="5" width="4" height="1.1" fill="#356a9b"/><rect x="7" y="6.9" width="4" height="2.3" fill="#8faac6"/></svg></div>
<div class="inp" style="left:976px;top:202.39999999999992px;width:58px;height:16.7px"></div>
<div class="t" style="left:976px;width:56px;top:204.99999999999994px;height:12px;line-height:12px;font-size:7.5px;color:#222;text-align:right">0</div>
<div class="btn" style="left:1034px;top:203.69999999999993px;width:18px;height:15.5px;border-radius:2.2px;box-shadow:inset 0 0 0 0.5px #2b5a86"><svg width="18" height="16" style="position:absolute;left:0;top:0"><rect x="6" y="4" width="6" height="6.2" fill="#b7c8da"/><rect x="7" y="5" width="4" height="1.1" fill="#356a9b"/><rect x="7" y="6.9" width="4" height="2.3" fill="#8faac6"/></svg></div>
<div class="inp" style="left:1059px;top:202.39999999999992px;width:58px;height:16.7px"></div>
<div class="t" style="left:1059px;width:56px;top:204.99999999999994px;height:12px;line-height:12px;font-size:7.5px;color:#222;text-align:right">0</div>
<div class="btn" style="left:1117px;top:203.69999999999993px;width:18px;height:15.5px;border-radius:2.2px;box-shadow:inset 0 0 0 0.5px #2b5a86"><svg width="18" height="16" style="position:absolute;left:0;top:0"><rect x="6" y="4" width="6" height="6.2" fill="#b7c8da"/><rect x="7" y="5" width="4" height="1.1" fill="#356a9b"/><rect x="7" y="6.9" width="4" height="2.3" fill="#8faac6"/></svg></div>
<div class="t" style="left:1156.7px;width:150px;top:204.99999999999994px;height:12px;line-height:12px;font-size:7.4px;color:#262626;text-align:right">-35.000.000,00</div>
</div>
<div style="left:5px;top:338px;width:1308px;height:19.6px;background:#f8f8f8"></div>
<div class="cb" style="left:9px;top:341px;border-color:#b8b8b8"></div>
<svg class="si" style="left:28.1px;top:344.7px" width="6" height="8" viewBox="0 0 6 8"><path d="M0 3 L2.6 0 L5.2 3Z M0 4.2 L2.6 7.2 L5.2 4.2Z" fill="#c4c4ba"/></svg>
<div class="t" style="left:36.400000000000006px;top:342.1px;height:12px;line-height:12px;font-size:7.5px;color:#262626;">Fecha</div>
<svg class="si" style="left:111.9px;top:344.7px" width="6" height="8" viewBox="0 0 6 8"><path d="M0 3 L2.6 0 L5.2 3Z M0 4.2 L2.6 7.2 L5.2 4.2Z" fill="#c4c4ba"/></svg>
<div class="t" style="left:119.9px;top:342.1px;height:12px;line-height:12px;font-size:7.5px;color:#262626;">CP - CC</div>
<svg class="si" style="left:264.1px;top:344.7px" width="6" height="8" viewBox="0 0 6 8"><path d="M0 3 L2.6 0 L5.2 3Z M0 4.2 L2.6 7.2 L5.2 4.2Z" fill="#c4c4ba"/></svg>
<div class="t" style="left:273.5px;top:342.1px;height:12px;line-height:12px;font-size:7.5px;color:#262626;">Organización.</div>
<svg class="si" style="left:417.1px;top:344.7px" width="6" height="8" viewBox="0 0 6 8"><path d="M0 3 L2.6 0 L5.2 3Z M0 4.2 L2.6 7.2 L5.2 4.2Z" fill="#c4c4ba"/></svg>
<div class="t" style="left:426.2px;top:342.1px;height:12px;line-height:12px;font-size:7.5px;color:#262626;">Documento No.</div>
<svg class="si" style="left:570.0px;top:344.7px" width="6" height="8" viewBox="0 0 6 8"><path d="M0 3 L2.6 0 L5.2 3Z M0 4.2 L2.6 7.2 L5.2 4.2Z" fill="#c4c4ba"/></svg>
<div class="t" style="left:579.6px;top:342.1px;height:12px;line-height:12px;font-size:7.5px;color:#262626;">Descripción</div>
<svg class="si" style="left:723.1px;top:344.7px" width="6" height="8" viewBox="0 0 6 8"><path d="M0 3 L2.6 0 L5.2 3Z M0 4.2 L2.6 7.2 L5.2 4.2Z" fill="#c4c4ba"/></svg>
<div class="t" style="left:732.2px;top:342.1px;height:12px;line-height:12px;font-size:7.5px;color:#262626;">Convertido</div>
<svg class="si" style="left:807.0px;top:344.7px" width="6" height="8" viewBox="0 0 6 8"><path d="M0 3 L2.6 0 L5.2 3Z M0 4.2 L2.6 7.2 L5.2 4.2Z" fill="#c4c4ba"/></svg>
<div class="t" style="left:815.1px;top:342.1px;height:12px;line-height:12px;font-size:7.5px;color:#262626;">Abierto</div>
<svg class="si" style="left:889.9px;top:344.7px" width="6" height="8" viewBox="0 0 6 8"><path d="M0 3 L2.6 0 L5.2 3Z M0 4.2 L2.6 7.2 L5.2 4.2Z" fill="#c4c4ba"/></svg>
<div class="t" style="left:898.4000000000001px;top:342.1px;height:12px;line-height:12px;font-size:7.5px;color:#262626;">Descuentos</div>
<svg class="si" style="left:973.0px;top:344.7px" width="6" height="8" viewBox="0 0 6 8"><path d="M0 3 L2.6 0 L5.2 3Z M0 4.2 L2.6 7.2 L5.2 4.2Z" fill="#c4c4ba"/></svg>
<div class="t" style="left:980.9000000000001px;top:342.1px;height:12px;line-height:12px;font-size:7.5px;color:#262626;">Ajuste</div>
<svg class="si" style="left:1055.7px;top:344.7px" width="6" height="8" viewBox="0 0 6 8"><path d="M0 3 L2.6 0 L5.2 3Z M0 4.2 L2.6 7.2 L5.2 4.2Z" fill="#c4c4ba"/></svg>
<div class="t" style="left:1064.1000000000001px;top:342.1px;height:12px;line-height:12px;font-size:7.5px;color:#262626;">Aplicado</div>
<svg class="si" style="left:1138.7px;top:344.7px" width="6" height="8" viewBox="0 0 6 8"><path d="M0 3 L2.6 0 L5.2 3Z M0 4.2 L2.6 7.2 L5.2 4.2Z" fill="#c4c4ba"/></svg>
<div class="t" style="left:1147.2px;top:342.1px;height:12px;line-height:12px;font-size:7.5px;color:#262626;">Pago Sobre/ Por debajo</div>
<svg class="si" style="left:1304.7px;top:344.7px" width="6" height="8" viewBox="0 0 6 8"><path d="M0 3 L2.6 0 L5.2 3Z M0 4.2 L2.6 7.2 L5.2 4.2Z" fill="#c4c4ba"/></svg>
<div style="left:1313px;top:338px;width:15px;height:19.6px;background:#cfcfcb"></div>
<div style="left:1313px;top:357.6px;width:15px;height:212px;background:#f0f0f0"></div>
<div style="left:1315.2px;top:479.2px;width:10.6px;height:44px;background:#bdbdbd"></div>
<svg style="left:1316px;top:363px" width="9" height="6" viewBox="0 0 9 6"><path d="M0.5 5 L4.5 1 L8.5 5Z" fill="#262626"/></svg>
<svg style="left:1316px;top:559px" width="9" height="6" viewBox="0 0 9 6"><path d="M0.5 1 L4.5 5 L8.5 1Z" fill="#262626"/></svg>
<div style="left:5px;top:570px;width:1323px;height:1px;background:#d0d0cc"></div>
<div style="left:5px;top:464px;width:1310px;height:19px;border:2px solid #f00"></div>
<div class="t" style="left:1341px;top:573.9px;height:12px;line-height:12px;font-size:7.35px;color:#262626;left:1259.3px;right:auto">1 - Suma -58.000.000,00</div>
<div class="t" style="left:36px;top:588.3px;height:12px;line-height:12px;font-size:7.9px;color:#262626;">Diferencia</div>
<div class="t" style="left:91.8px;top:588.3px;height:12px;line-height:12px;font-size:7.2px;color:#262626;">VES</div>
<div style="left:112px;top:585px;width:94px;height:17px;border:1px solid #ababab;background:#fff"></div>
<div class="t" style="right:1138px;top:588.8px;height:12px;line-height:12px;font-size:7.9px;color:#262626;text-align:right;">0,00</div>
<div class="t" style="left:320px;top:588.3px;height:12px;line-height:12px;font-size:7.9px;color:#262626;">Cargo</div>
<div style="left:348px;top:585px;width:130px;height:17px;border:1px solid #b0b0b0;background:#fff"></div>
<div style="left:467px;top:585px;width:11px;height:16px;border:1px solid #b3b3b3;background:#f6f6f6;border-radius:0 2px 2px 0;box-shadow:0.6px 0.6px 0 #d6d6d6"></div>
<svg style="left:470px;top:591.5px" width="6" height="4" viewBox="0 0 6 4"><path d="M0.5 0.5 L5.5 0.5 L3 3.5Z" fill="#111"/></svg>
<div class="t" style="right:655.5px;top:588.3px;height:12px;line-height:12px;font-size:7.9px;color:#262626;text-align:right;">Organización.</div>
<div style="left:691px;top:585px;width:131px;height:17px;border:1px solid #b0b0b0;background:#fff"></div>
<div style="left:811px;top:585px;width:11px;height:16px;border:1px solid #b3b3b3;background:#f6f6f6;border-radius:0 2px 2px 0;box-shadow:0.6px 0.6px 0 #d6d6d6"></div>
<svg style="left:814px;top:591.5px" width="6" height="4" viewBox="0 0 6 4"><path d="M0.5 0.5 L5.5 0.5 L3 3.5Z" fill="#111"/></svg>
<div class="t" style="left:976px;top:588.3px;height:12px;line-height:12px;font-size:7.9px;color:#262626;">Descripción</div>
<div style="left:1024.5px;top:585px;width:93px;height:17px;border:1px solid #ababab;background:#fff"></div>
<div style="left:1272px;top:586px;width:32px;height:16px;background:#356a9b;border-radius:3px"></div>
<div style="left:1304px;top:586px;width:32px;height:16px;background:#356a9b;border-radius:3px"></div>
<svg style="left:1272px;top:586px" width="64" height="16" viewBox="0 0 64 16"><path d="M10 2.5 L21 13.5 M21 2.5 L10 13.5" stroke="#e6edf4" stroke-width="1"/><path d="M43 8 L48 13.5 L55 2.5" stroke="#e6edf4" stroke-width="1" fill="none"/></svg>
<div style="left:5px;top:604px;width:1336px;height:1px;background:#f0f0f0"></div>
<div class="t" style="left:5px;top:611.0px;height:12px;line-height:12px;font-size:7.7px;color:#111;-webkit-text-stroke:0.25px #111">Es preferible seleccionar un par factura pago y procesarlo uno cada vez</div>
<div style="left:1333px;top:611px;width:1px;height:10px;background:#6d8fe0"></div>
<div style="left:5px;top:619px;width:1336px;height:6px;background:linear-gradient(#fff,#ececec)"></div>
<div style="left:0px;top:625px;width:1341px;height:1px;background:#262626"></div>
</body></html>
